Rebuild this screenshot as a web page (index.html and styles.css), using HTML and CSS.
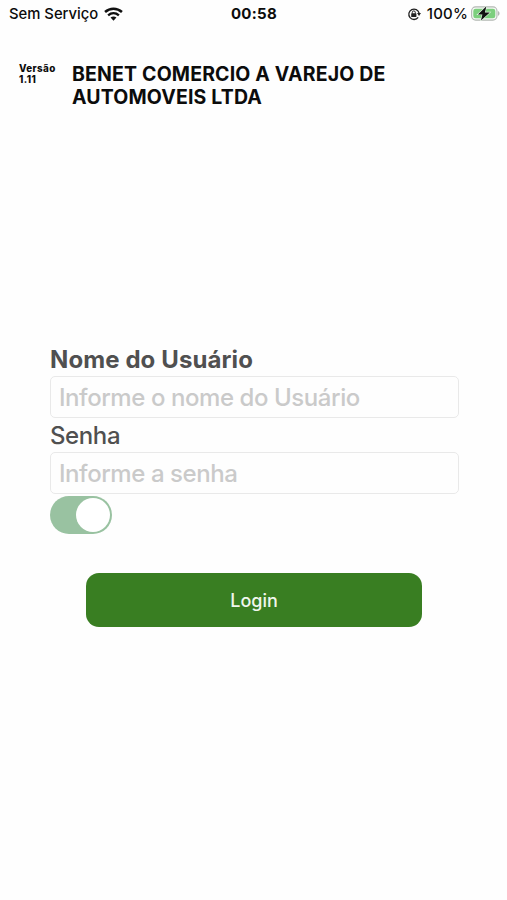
FILE: index.html
```html
<!DOCTYPE html>
<html lang="pt-BR">
<head>
    <meta charset="UTF-8">
    <meta name="viewport" content="width=device-width, initial-scale=1.0">
    <title>Login</title>
    <link rel="stylesheet" href="styles.css">
</head>
<body>
    <div class="status-bar">
        <div class="network">
            <span class="carrier">Sem Serviço</span>
            <svg class="wifi" width="19" height="14" viewBox="0 0 18 13">
                <path d="M1 4.6C5.6.5 12.4.5 17 4.6" fill="none" stroke="#111" stroke-width="2.4"/>
                <path d="M3.9 7.7C6.9 5.1 11.1 5.1 14.1 7.7" fill="none" stroke="#111" stroke-width="2.2"/>
                <path d="M6.2 9.9C7.9 8.5 10.1 8.5 11.8 9.9L9 12.8Z" fill="#111"/>
            </svg>
        </div>
        <span class="clock">00:58</span>
        <div class="power">
            <svg class="lock" width="14" height="14" viewBox="0 0 14 14">
                <path d="M11.2 10.4A5.2 5.2 0 1 1 12.1 6.2" fill="none" stroke="#222" stroke-width="1.3"/>
                <path d="M10 6.1h4l-2 3Z" fill="#222"/>
                <rect x="4.2" y="6.2" width="5.2" height="3.9" rx=".6" fill="#222"/>
                <path d="M5.3 6.6V5.4a1.5 1.5 0 0 1 3 0v1.2" fill="none" stroke="#222" stroke-width="1"/>
            </svg>
            <span class="percent">100%</span>
            <svg class="battery" width="29" height="15" viewBox="0 0 29 15">
                <rect x=".6" y=".9" width="25.4" height="13.2" rx="4" fill="#f4f8f4" stroke="#b3b8b3" stroke-width="1.1"/>
                <rect x="2.3" y="2.7" width="22" height="9.6" rx="2.4" fill="#7ccf7d"/>
                <path d="M27 5c2 .8 2 4 0 4.8Z" fill="#b3b8b3"/>
                <path d="M15.4.3L6.9 8.4h4.5l-1.5 6.2 8.9-8.2h-4.9Z" fill="#111" stroke="#e6f5e6" stroke-width="1.2" paint-order="stroke"/>
            </svg>
        </div>
    </div>

    <div class="header">
        <p class="version">Versão<br>1.11</p>
        <h1>BENET COMERCIO A VAREJO DE<br>AUTOMOVEIS LTDA</h1>
    </div>

    <form class="login">
        <label class="user-label" for="user">Nome do Usuário</label>
        <input type="text" id="user" placeholder="Informe o nome do Usuário">
        <label class="password-label" for="password">Senha</label>
        <input type="password" id="password" placeholder="Informe a senha">
        <input type="checkbox" class="switch" aria-label="Senha" checked>
        <button type="button">Login</button>
    </form>
</body>
</html>
```

FILE: styles.css
```css
* {
    box-sizing: border-box;
}
body {
    margin: 0;
    min-height: 900px;
    background-color: #fefefe;
    color: #0c0c0c;
    font-family: Inter, "Liberation Sans", sans-serif;
}
.status-bar {
    display: grid;
    grid-template-columns: 1fr auto 1fr;
    align-items: center;
    height: 27px;
    padding: 0 7px 0 9px;
    font-size: 15px;
    line-height: 27px;
}
.network, .power {
    display: flex;
    align-items: center;
    height: 27px;
}
.carrier {
    width: 90px;
    padding-top: 1px;
    font-size: 14.8px;
    font-weight: 500;
    line-height: 26px;
    white-space: nowrap;
}
.wifi {
    margin-left: 5px;
}
.clock {
    margin-left: -1px;
    font-weight: 700;
    letter-spacing: 0.3px;
}
.power {
    justify-content: flex-end;
}
.percent {
    margin: 0 3px 0 6px;
    font-weight: 500;
    letter-spacing: 0.2px;
}
.header {
    display: flex;
    padding: 36px 19px 0;
}
.version {
    width: 53px;
    margin: 0;
    font-size: 9.8px;
    font-weight: 800;
    line-height: 11px;
    letter-spacing: 0.4px;
}
h1 {
    margin: 0;
    font-size: 19.5px;
    font-weight: 700;
    line-height: 23px;
    letter-spacing: 0.16px;
}
.login {
    display: flex;
    flex-direction: column;
    margin: 235px 48px 0 50px;
}
label {
    color: #505050;
    font-size: 24px;
    line-height: 32px;
    height: 32px;
}
.user-label {
    font-weight: 700;
    letter-spacing: 0.1px;
}
.password-label {
    height: 34px;
    line-height: 36px;
    font-weight: 500;
    letter-spacing: -0.4px;
}
input[type="text"], input[type="password"] {
    width: 100%;
    height: 42px;
    padding: 0 8px;
    border: 1px solid #e9e9e9;
    border-radius: 5px;
    background-color: #fefefe;
    font-family: inherit;
    font-size: 24px;
    font-weight: 500;
    letter-spacing: -0.43px;
}
input::placeholder {
    color: #cacaca;
}
.switch {
    appearance: none;
    width: 62px;
    height: 38px;
    margin: 2px 0 0;
    padding: 2px;
    border-radius: 19px;
    background-color: #99c2a1;
}
.switch::before {
    content: "";
    display: block;
    width: 34px;
    height: 34px;
    margin-left: 24px;
    border-radius: 50%;
    background-color: #fff;
}
button {
    height: 54px;
    margin: 39px 37px 0 36px;
    border: none;
    border-radius: 13px;
    background-color: #397e22;
    color: #f0f6ed;
    font-family: inherit;
    font-size: 18px;
    font-weight: 500;
}
```
